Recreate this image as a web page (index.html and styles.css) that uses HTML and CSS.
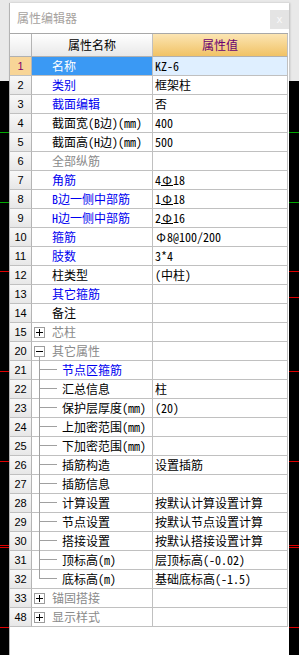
FILE: index.html
```html
<!DOCTYPE html>
<html lang="zh-CN">
<head>
<meta charset="utf-8">
<title>属性编辑器</title>
<link rel="stylesheet" href="styles.css">
</head>
<body>
<div class="dlg">
  <div class="titlebar"><span class="title">属性编辑器</span><span class="close">x</span></div>
  <div class="grid">
    <div class="row head"><div class="num"></div><div class="name">属性名称</div><div class="val">属性值</div></div>
    <div class="row sel"><div class="num">1</div><div class="name">名称</div><div class="val">KZ-6</div></div>
    <div class="row"><div class="num">2</div><div class="name b">类别</div><div class="val">框架柱</div></div>
    <div class="row"><div class="num">3</div><div class="name b">截面编辑</div><div class="val">否</div></div>
    <div class="row"><div class="num">4</div><div class="name">截面宽(B边)(mm)</div><div class="val">400</div></div>
    <div class="row"><div class="num">5</div><div class="name">截面高(H边)(mm)</div><div class="val">500</div></div>
    <div class="row"><div class="num">6</div><div class="name g">全部纵筋</div><div class="val"></div></div>
    <div class="row"><div class="num">7</div><div class="name b">角筋</div><div class="val">4<span class="g3">Φ</span>18</div></div>
    <div class="row"><div class="num">8</div><div class="name b">B边一侧中部筋</div><div class="val">1<span class="g3">Φ</span>18</div></div>
    <div class="row"><div class="num">9</div><div class="name b">H边一侧中部筋</div><div class="val">2<span class="g3">Φ</span>16</div></div>
    <div class="row"><div class="num">10</div><div class="name b">箍筋</div><div class="val"><span class="g1">Φ</span>8@100/200</div></div>
    <div class="row"><div class="num">11</div><div class="name b">肢数</div><div class="val">3*4</div></div>
    <div class="row"><div class="num">12</div><div class="name">柱类型</div><div class="val">(中柱)</div></div>
    <div class="row"><div class="num">13</div><div class="name b">其它箍筋</div><div class="val"></div></div>
    <div class="row"><div class="num">14</div><div class="name">备注</div><div class="val"></div></div>
    <div class="row"><div class="num">15</div><div class="name g tp"><span class="box plus"></span>芯柱</div><div class="val"></div></div>
    <div class="row"><div class="num">20</div><div class="name g tp open"><span class="box"></span>其它属性</div><div class="val"></div></div>
    <div class="row"><div class="num">21</div><div class="name b child">节点区箍筋</div><div class="val"></div></div>
    <div class="row"><div class="num">22</div><div class="name child">汇总信息</div><div class="val">柱</div></div>
    <div class="row"><div class="num">23</div><div class="name child">保护层厚度(mm)</div><div class="val">(20)</div></div>
    <div class="row"><div class="num">24</div><div class="name child">上加密范围(mm)</div><div class="val"></div></div>
    <div class="row"><div class="num">25</div><div class="name child">下加密范围(mm)</div><div class="val"></div></div>
    <div class="row"><div class="num">26</div><div class="name child">插筋构造</div><div class="val">设置插筋</div></div>
    <div class="row"><div class="num">27</div><div class="name child">插筋信息</div><div class="val"></div></div>
    <div class="row"><div class="num">28</div><div class="name child">计算设置</div><div class="val">按默认计算设置计算</div></div>
    <div class="row"><div class="num">29</div><div class="name child">节点设置</div><div class="val">按默认节点设置计算</div></div>
    <div class="row"><div class="num">30</div><div class="name child">搭接设置</div><div class="val">按默认搭接设置计算</div></div>
    <div class="row"><div class="num">31</div><div class="name child">顶标高(m)</div><div class="val">层顶标高(-0.02)</div></div>
    <div class="row"><div class="num">32</div><div class="name child last">底标高(m)</div><div class="val">基础底标高(-1.5)</div></div>
    <div class="row"><div class="num">33</div><div class="name g tp"><span class="box plus"></span>锚固搭接</div><div class="val"></div></div>
    <div class="row"><div class="num">48</div><div class="name g tp"><span class="box plus"></span>显示样式</div><div class="val"></div></div>
  </div>
</div>
</body>
</html>
```
FILE: styles.css
```css
html, body {
  margin: 0;
  height: 655px;
  overflow: hidden;
}
body {
  padding-top: 3px;
  box-sizing: border-box;
  font-family: "Noto Sans Mono CJK SC", "Noto Sans CJK SC", sans-serif;
  font-size: 12px;
  color: #000;
  background:
    linear-gradient(#00a800, #00a800) 0 132px / 100% 1px no-repeat,
    linear-gradient(#00a800, #00a800) 0 202px / 100% 1px no-repeat,
    linear-gradient(#e00000, #e00000) 0 271px / 100% 1px no-repeat,
    linear-gradient(#e00000, #e00000) right 0 top 297px / 10px 1px no-repeat,
    linear-gradient(#e00000, #e00000) 0 371px / 100% 1px no-repeat,
    linear-gradient(#e00000, #e00000) 0 461px / 100% 1px no-repeat,
    linear-gradient(#e00000, #e00000) 0 545px / 100% 1px no-repeat,
    linear-gradient(#e00000, #e00000) 0 547px / 100% 1px no-repeat,
    linear-gradient(#e00000, #e00000) 0 627px / 100% 1px no-repeat,
    linear-gradient(#e9e9e9, #e9e9e9) 0 0 / 100% 81px no-repeat,
    #000;
}
.dlg {
  margin-left: 9px;
  width: 280px;
  height: 652px;
  box-sizing: border-box;
  border-left: 1px solid #b4b4b4;
  background: #fff;
  box-shadow: 1px 0 2px rgba(0, 0, 0, 0.2);
}
.titlebar {
  height: 30px;
  display: flex;
  justify-content: space-between;
  align-items: flex-start;
}
.title {
  margin: 6px 0 0 7px;
  line-height: 18px;
  color: #a6a29e;
  font-family: "Noto Sans CJK SC", sans-serif;
}
.close {
  margin-top: 7px;
  width: 19px;
  height: 19px;
  background: #e4e4e4;
  color: #fafafa;
  font: 11px/18px "Liberation Sans", sans-serif;
  text-align: center;
}
.grid {
  width: 278px;
  border-top: 1px solid #a8a8a8;
}
.row {
  display: grid;
  grid-template-columns: 22px 121px 135px;
  height: 19px;
}
.row > div {
  box-sizing: border-box;
  height: 19px;
  border-right: 1px solid #c0c0c0;
  border-bottom: 1px solid #c0c0c0;
}
.num {
  font: 11px/18px "Liberation Sans", sans-serif;
  text-align: center;
  background: linear-gradient(#f8f8f8, #e7e7e7);
  border-right-color: #b4b4b4 !important;
}
.name {
  position: relative;
  display: flex;
  align-items: center;
  padding-left: 20px;
  line-height: 18px;
  white-space: nowrap;
  overflow: visible;
}
.val {
  padding-left: 2px;
  line-height: 18px;
  white-space: nowrap;
  overflow: hidden;
}
.head, .head > div {
  height: 23px !important;
}
.head > div {
  border-bottom-color: #b0b0b0 !important;
}
.head .num {
  background: linear-gradient(#ffffff, #eaeaea);
}
.head .name {
  justify-content: center;
  padding-left: 0;
  line-height: 22px;
  background: linear-gradient(#ffffff, #e8e8e8);
  font-family: "Noto Sans CJK SC", sans-serif;
}
.head .val {
  text-align: center;
  padding-left: 0;
  line-height: 22px;
  color: #6a0072;
  background: linear-gradient(#fce5b3, #f1c265);
  font-family: "Noto Sans CJK SC", sans-serif;
}
.sel .num {
  background: #f8d597;
  color: #80006a;
}
.sel .name {
  background: #3a99f4;
  color: #fff;
}
.sel .val {
  background: #dfefff;
}
.b { color: #0000f0; }
.g { color: #8a8a8a; }
.g3 {
  display: inline-block;
  width: 12px;
  text-align: center;
  line-height: 11px;
  border-bottom: 1px solid #000;
}
.g1 {
  display: inline-block;
  width: 12px;
  text-align: center;
}
.tp {
  padding-left: 2px;
}
.box {
  position: relative;
  flex: none;
  width: 11px;
  height: 11px;
  box-sizing: border-box;
  border: 1px solid #9c9c9c;
  margin-right: 7px;
  background: #fff;
}
.box::before {
  content: "";
  position: absolute;
  left: 1px;
  top: 4px;
  width: 7px;
  height: 1px;
  background: #000;
}
.plus::after {
  content: "";
  position: absolute;
  left: 4px;
  top: 1px;
  width: 1px;
  height: 7px;
  background: #000;
}
.open::after {
  content: "";
  position: absolute;
  left: 7px;
  top: 14px;
  bottom: -1px;
  width: 1px;
  background: #a0a0a0;
}
.child {
  padding-left: 30px;
}
.child::before {
  content: "";
  position: absolute;
  left: 7px;
  top: 0;
  bottom: -1px;
  width: 1px;
  background: #a0a0a0;
}
.child.last::before {
  bottom: auto;
  height: 9px;
}
.child::after {
  content: "";
  position: absolute;
  left: 7px;
  top: 8px;
  width: 18px;
  height: 1px;
  background: #a0a0a0;
}
```
